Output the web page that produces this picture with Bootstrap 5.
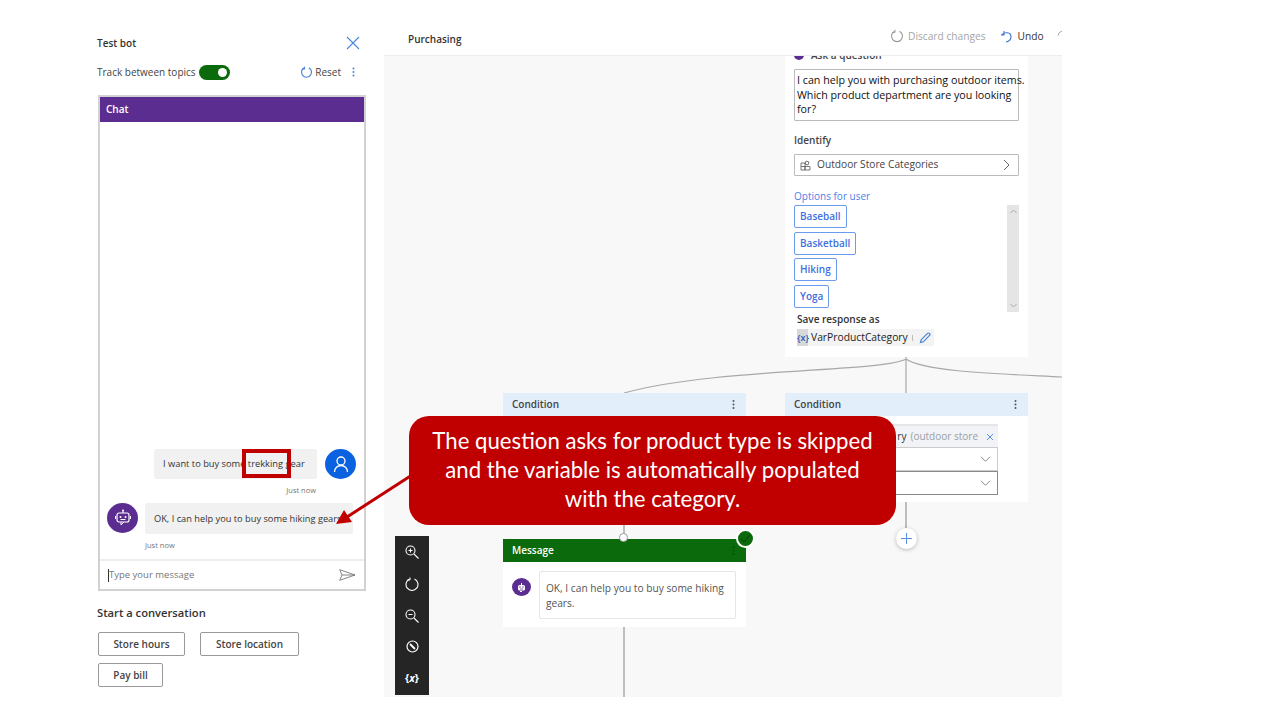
<!DOCTYPE html>
<html lang="en">
  <head>
    <meta charset="UTF-8" />
    <title>Test bot - Purchasing</title>
    <link href="https://cdn.jsdelivr.net/npm/bootstrap@5.3.0/dist/css/bootstrap.min.css" rel="stylesheet" />
    <style>
      html, body { height: 720px; overflow: hidden; }
      body { font-family: "Open Sans", "Noto Sans", sans-serif; font-size: 10px; color: #333; background: #fff; position: relative; }
      svg { display: block; flex: none; }
      .semi { font-weight: 600; }

      /* left test pane */
      .test-pane { width: 269px; margin-left: 97px; }
      .pane-title { height: 59px; padding-top: 36px; font-size: 10px; line-height: 14px; padding-right: 6px; }
      .track-row { height: 26px; font-size: 10px; color: #444; padding-right: 11px; }
      .track-toggle { width: 31px; height: 15px; border-radius: 8px; background: #0b6a0b; margin-left: 3px; padding: 3px; }
      .track-toggle span { width: 9px; height: 9px; border-radius: 50%; background: #fff; }
      .reset-group { gap: 2px; }
      .reset-dots { margin-left: 9px; }
      .chat-frame { margin-top: 10px; margin-left: 1px; width: 268px; height: 496px; border: 2px solid #d2d2d2; }
      .chat-head { height: 25px; background: #5c2d91; color: #fff; font-size: 10px; line-height: 25px; padding-left: 6px; flex: none; }
      .bubble { background: #f1f1f1; font-size: 9.3px; color: #333; border-radius: 2px; white-space: nowrap; }
      .bubble-user { width: 163px; height: 30px; line-height: 30px; padding-left: 9px; overflow: hidden; }
      .bubble-bot { width: 208px; height: 31px; line-height: 31px; padding-left: 9px; overflow: hidden; font-size: 9.25px; }
      .chat-avatar { width: 31px; height: 30px; border-radius: 50%; flex: none; }
      .avatar-user { background: #0b62e0; }
      .avatar-bot { background: #5c2d91; }
      .row-bot { padding-left: 7px; gap: 7px; margin-top: 8px; }
      .stamp { font-size: 7.5px; color: #777; line-height: 10px; }
      .stamp-user { margin-top: 6px; padding-right: 48px; text-align: right; }
      .stamp-bot { padding-left: 45px; margin-top: 6px; margin-bottom: 9px; }
      .chat-input { height: 30px; border-top: 2px solid #eee; flex: none; padding: 0 8px; color: #777; font-size: 9.5px; }
      .caret-bar { width: 1px; height: 13px; background: #333; }
      .start-title { font-size: 11.2px; line-height: 16px; margin-top: 14px; color: #333; }
      .btn-quick { height: 24px; border: 1px solid #999; border-radius: 2px; font-size: 10px; font-weight: 600; color: #444; line-height: 22px; text-align: center; background: #fff; padding: 0; }
      .quick-a { margin-top: 11px; margin-left: 1px; gap: 15px; }
      .quick-hours { width: 87px; }
      .quick-loc { width: 99px; }
      .quick-pay { width: 65px; margin-left: 1px; margin-top: 7px; }

      /* canvas side */
      .flow-side { width: 678px; margin-left: 18px; margin-top: 20px; height: 677px; }
      .flow-head { height: 36px; background: #fff; border-bottom: 1px solid #ececec; padding: 4px 0 0 24px; font-size: 10px; color: #333; }
      .flow-actions { width: 172px; color: #a5a5a5; font-size: 10.2px; margin-top: -6px; }
      .action-undo { margin-left: 14px; }
      .undo-text { color: #333; margin-left: 6px; font-weight: 500; }
      .flow-canvas { height: 641px; background: #f8f8f8; position: relative; overflow: hidden; }
      .flow-node { position: absolute; background: #fff; width: 243px; }
      .node-ask { left: 401px; top: -10px; height: 311px; padding: 0 9px; }
      .node-cond-a { left: 119px; top: 337px; height: 110px; }
      .node-cond-b { left: 401px; top: 337px; height: 109px; }
      .node-msg { left: 119px; top: 483px; height: 88px; }
      .cond-head { height: 23px; background: #e3eefb; padding: 0 11px 0 9px; font-size: 10px; font-weight: 600; color: #444; }
      .msg-head { height: 23px; background: #0b6a0b; padding: 0 11px 0 9px; font-size: 10px; font-weight: 600; color: #fff; }
      .ask-title { height: 23px; padding-bottom: 5px; font-size: 10px; font-weight: 600; color: #444; gap: 7px; }
      .ask-dot { width: 10px; height: 10px; border-radius: 50%; background: #5c2d91; }
      .ask-text { height: 52px; border: 1px solid #bbb; border-radius: 1px; font-size: 10.7px; line-height: 14.5px; color: #111; padding: 3px 2px 0 2px; white-space: nowrap; }
      .field-label { font-size: 10px; font-weight: 600; color: #444; line-height: 14px; }
      .identify-label { margin-top: 12px; margin-bottom: 7px; }
      .pick-field { height: 22px; border: 1px solid #bbb; border-radius: 1px; font-size: 10.2px; color: #444; padding: 0 8px 0 5px; }
      .pick-name { margin-left: 6px; }
      .opt-label { font-size: 10px; color: #4f7fe8; line-height: 14px; margin-top: 13px; }
      .opt-list { height: 107px; margin-top: 2px; }
      .opt-btn { border: 1.5px solid #6b9bef; border-radius: 2px; height: 23px; line-height: 20px; font-size: 10px; font-weight: 600; color: #3f6fe0; padding: 0 5px; background: #fff; margin-bottom: 3.7px; width: fit-content; }
      .scroll-rail { width: 12px; background: #e5e5e5; }
      .save-label { font-size: 10px; font-weight: 600; color: #333; line-height: 14px; margin: 0 0 3px 3px; }
      .var-chip { width: 137px; height: 17px; background: #f3f3f3; margin-left: 3px; font-size: 10.3px; color: #222; }
      .var-tag { width: 11px; height: 17px; background: #d8d8d8; color: #2b58b8; font-size: 9px; font-weight: 600; text-align: center; line-height: 17px; margin-right: 3px; }
      .chip-sep { width: 1px; height: 6px; background: #bbb; margin: 0 6px 0 4px; }
      .cond-body { padding: 8px 30px 0 32px; }
      .cond-chip { height: 23px; border-top: 2px solid #e6e6e6; background: #f1f3f6; color: #9aa0a8; font-size: 10px; }
      .cond-var { color: #333; }
      .cond-drop { height: 24px; border: 1px solid #ccc; padding-right: 6px; }
      .cond-drop.is-dark { border-color: #8a8a8a; }
      .msg-body { padding: 9px 10px 0 9px; }
      .msg-bot { width: 19px; height: 18px; border-radius: 50%; background: #5c2d91; margin-top: 7px; margin-right: 8px; }
      .msg-bubble { width: 198px; height: 48px; border: 1px solid #e6e6e6; border-radius: 2px; padding: 9px 6px 0; font-size: 10.2px; line-height: 14.5px; color: #555; }
      .check-badge { position: absolute; left: 352px; top: 473px; width: 19px; height: 19px; border-radius: 50%; background: #0b6a0b; border: 2px solid #fff; z-index: 2; }
      .dot-port { position: absolute; left: 235px; top: 477px; width: 9px; height: 9px; border-radius: 50%; background: #fff; border: 1px solid #999; z-index: 2; }
      .plus-btn { position: absolute; left: 512px; top: 472px; width: 21px; height: 21px; border-radius: 50%; background: #fff; box-shadow: 0 1px 4px rgba(0, 0, 0, .25); }
      .wire-layer { position: absolute; left: 0; top: 0; }
      .zoom-bar { position: absolute; left: 11px; top: 480px; width: 34px; height: 159px; background: #252525; padding: 9px 0 8px; color: #fff; font-size: 10.5px; font-weight: 700; z-index: 2; }

      /* slide annotations */
      .slide-callout { position: absolute; left: 409px; top: 416px; width: 487px; height: 109px; border-radius: 20px; background: #c00000; color: #fff; z-index: 5; font-family: Lato, "Open Sans", sans-serif; font-size: 22.2px; line-height: 29px; text-align: center; padding-top: 10px; white-space: nowrap; }
      .word-box { position: absolute; left: 242px; top: 449px; width: 49px; height: 29px; border: 4px solid #c00000; z-index: 5; }
      .arrow-layer { position: absolute; left: 0; top: 0; z-index: 6; }
    </style>
  </head>

  <body>
    <div class="d-flex align-items-start">
      <!-- Test bot pane -->
      <div class="test-pane">
        <div class="pane-title d-flex justify-content-between semi">
          <span>Test bot</span>
          <svg width="14" height="14" viewBox="0 0 14 14"><path d="M1 1l12 12M13 1L1 13" stroke="#4a86d8" stroke-width="1.1" fill="none"/></svg>
        </div>
        <div class="track-row d-flex align-items-center">
          <span>Track between topics</span>
          <div class="track-toggle d-flex justify-content-end"><span></span></div>
          <div class="ms-auto d-flex align-items-center reset-group">
            <svg width="13" height="13" viewBox="0 0 13 13"><path d="M4.2 1.8A5 5 0 1 0 8.8 1.8" stroke="#4a86d8" stroke-width="1.2" fill="none"/><path d="M4.6 .6v2.6H2" stroke="#4a86d8" fill="none"/></svg>
            <span>Reset</span>
            <svg class="reset-dots" width="3" height="10" viewBox="0 0 3 10"><circle cx="1.5" cy="1.5" r="1" fill="#4a86d8"/><circle cx="1.5" cy="5" r="1" fill="#4a86d8"/><circle cx="1.5" cy="8.5" r="1" fill="#4a86d8"/></svg>
          </div>
        </div>
        <div class="chat-frame d-flex flex-column">
          <div class="chat-head semi">Chat</div>
          <div class="flex-grow-1 d-flex flex-column justify-content-end">
            <div class="d-flex justify-content-end gap-2 pe-2">
              <div class="bubble bubble-user">I want to buy some trekking gear</div>
              <div class="chat-avatar avatar-user d-flex align-items-center justify-content-center">
                <svg width="18" height="18" viewBox="0 0 18 18"><circle cx="9" cy="6" r="4" fill="none" stroke="#fff" stroke-width="1.3"/><path d="M2.5 17c0-4 3-6.5 6.5-6.5s6.5 2.5 6.5 6.5" fill="none" stroke="#fff" stroke-width="1.3"/></svg>
              </div>
            </div>
            <div class="stamp stamp-user">Just now</div>
            <div class="d-flex row-bot">
              <div class="chat-avatar avatar-bot d-flex align-items-center justify-content-center">
                <svg width="18" height="18" viewBox="0 0 18 18"><path d="M9 1v3" stroke="#fff"/><circle cx="9" cy="1.5" r="1" fill="#fff"/><rect x="3" y="4" width="12" height="9" rx="2" fill="none" stroke="#fff" stroke-width="1.2"/><path d="M1.5 7v3M16.5 7v3M7 13v3l3-3" stroke="#fff" fill="none"/><circle cx="6.5" cy="8" r="1" fill="#fff"/><circle cx="11.5" cy="8" r="1" fill="#fff"/><path d="M6.5 10.5h5" stroke="#fff"/></svg>
              </div>
              <div class="bubble bubble-bot">OK, I can help you to buy some hiking gears.</div>
            </div>
            <div class="stamp stamp-bot">Just now</div>
          </div>
          <div class="chat-input d-flex align-items-center">
            <span class="caret-bar"></span><span>Type your message</span>
            <svg class="ms-auto" width="17" height="12" viewBox="0 0 17 12"><path d="M.7 .7L16 6 .7 11.3 3 6zM3 6h13" fill="none" stroke="#777" stroke-width=".9"/></svg>
          </div>
        </div>
        <div class="start-title semi">Start a conversation</div>
        <div class="d-flex quick-a">
          <button class="btn-quick quick-hours">Store hours</button>
          <button class="btn-quick quick-loc">Store location</button>
        </div>
        <button class="btn-quick quick-pay">Pay bill</button>
      </div>

      <!-- Authoring canvas -->
      <div class="flow-side d-flex flex-column">
        <div class="flow-head d-flex align-items-center justify-content-between">
          <span class="semi">Purchasing</span>
          <div class="flow-actions d-flex align-items-center">
            <svg width="14" height="14" viewBox="0 0 14 14"><path d="M4.5 2.2A5.5 5.5 0 1 0 9.5 2.2" stroke="#999" stroke-width="1.1" fill="none"/><path d="M5 .8v2.6H2.4" stroke="#999" fill="none"/></svg>
            <span class="ms-1">Discard changes</span>
            <svg class="action-undo" width="12" height="13" viewBox="0 0 12 13"><path d="M4 1v4H1M1.5 5C4 1.5 11 2 11 6.5c0 3-2.5 5-5 5.5" stroke="#3f72c8" stroke-width="1.1" fill="none"/></svg>
            <span class="undo-text">Undo</span>
            <svg class="ms-auto" width="5" height="12" viewBox="0 0 5 12"><path d="M5 1.2A5 5 0 0 0 1 5.5" stroke="#aaa" fill="none"/></svg>
          </div>
        </div>
        <div class="flow-canvas">
          <svg class="wire-layer" width="678" height="641" viewBox="0 0 678 641">
            <path d="M522 301v36M522 303C500 316 330 312 240 337M522 303C540 316 620 318 678 321" fill="none" stroke="#a8a8a8" stroke-width="1.2"/>
            <path d="M240 469v14M240 571v70M522 446v26" fill="none" stroke="#bdbdbd" stroke-width="2"/>
          </svg>

          <!-- Question node -->
          <div class="flow-node node-ask">
            <div class="ask-title d-flex align-items-center"><span class="ask-dot"></span><span>Ask a question</span></div>
            <div class="ask-text">I can help you with purchasing outdoor items.<br />Which product department are you looking<br />for?</div>
            <div class="field-label identify-label">Identify</div>
            <div class="pick-field d-flex align-items-center">
              <svg width="11" height="11" viewBox="0 0 11 11"><path d="M1 3h4v7H1zM5 6.5h5V10H5zM1 6.5h4M6 1l3 1-1 3-3-1z" fill="none" stroke="#555" stroke-width=".8"/></svg>
              <span class="pick-name">Outdoor Store Categories</span>
              <svg class="ms-auto" width="7" height="12" viewBox="0 0 7 12"><path d="M1 1l5 5-5 5" fill="none" stroke="#666"/></svg>
            </div>
            <div class="opt-label">Options for user</div>
            <div class="opt-list d-flex justify-content-between">
              <div class="d-flex flex-column">
                <div class="opt-btn">Baseball</div>
                <div class="opt-btn">Basketball</div>
                <div class="opt-btn">Hiking</div>
                <div class="opt-btn">Yoga</div>
              </div>
              <div class="scroll-rail d-flex flex-column justify-content-between align-items-center py-1">
                <svg width="7" height="5" viewBox="0 0 7 5"><path d="M.5 4l3-3 3 3" fill="none" stroke="#aaa"/></svg>
                <svg width="7" height="5" viewBox="0 0 7 5"><path d="M.5 1l3 3 3-3" fill="none" stroke="#aaa"/></svg>
              </div>
            </div>
            <div class="save-label">Save response as</div>
            <div class="var-chip d-flex align-items-center">
              <span class="var-tag">{x}</span>
              <span>VarProductCategory</span>
              <span class="chip-sep"></span>
              <svg width="12" height="12" viewBox="0 0 12 12"><path d="M1.5 10.5l.7-2.8L8.5 1.400a1.300 1.300 0 0 1 2 2L4.300 9.800z" fill="none" stroke="#3f7fd8" stroke-width="1.2"/></svg>
            </div>
          </div>

          <!-- Condition nodes -->
          <div class="flow-node node-cond-a">
            <div class="cond-head d-flex align-items-center justify-content-between">
              <span>Condition</span>
              <svg width="3" height="9" viewBox="0 0 3 9"><circle cx="1.5" cy="1" r="1" fill="#555"/><circle cx="1.5" cy="4.5" r="1" fill="#555"/><circle cx="1.5" cy="8" r="1" fill="#555"/></svg>
            </div>
          </div>
          <div class="flow-node node-cond-b">
            <div class="cond-head d-flex align-items-center justify-content-between">
              <span>Condition</span>
              <svg width="3" height="9" viewBox="0 0 3 9"><circle cx="1.5" cy="1" r="1" fill="#555"/><circle cx="1.5" cy="4.5" r="1" fill="#555"/><circle cx="1.5" cy="8" r="1" fill="#555"/></svg>
            </div>
            <div class="cond-body">
              <div class="cond-chip d-flex align-items-center justify-content-end pe-1">
                <span class="cond-var">ry</span><span class="ms-1">(outdoor store</span>
                <svg class="ms-2" width="8" height="8" viewBox="0 0 8 8"><path d="M1 1l6 6M7 1L1 7" stroke="#5b8fe0" fill="none"/></svg>
              </div>
              <div class="cond-drop d-flex align-items-center justify-content-end">
                <svg width="11" height="6" viewBox="0 0 11 6"><path d="M1 .8l4.5 4.5L10 .8" fill="none" stroke="#888"/></svg>
              </div>
              <div class="cond-drop is-dark d-flex align-items-center justify-content-end">
                <svg width="11" height="6" viewBox="0 0 11 6"><path d="M1 .8l4.5 4.5L10 .8" fill="none" stroke="#888"/></svg>
              </div>
            </div>
          </div>

          <!-- Message node -->
          <span class="dot-port"></span>
          <span class="check-badge d-flex align-items-center justify-content-center">
            <svg width="11" height="9" viewBox="0 0 11 9"><path d="M1 5l3 3 6-7" fill="none" stroke="#063f06"/></svg>
          </span>
          <div class="flow-node node-msg">
            <div class="msg-head d-flex align-items-center justify-content-between">
              <span>Message</span>
              <svg width="3" height="9" viewBox="0 0 3 9"><circle cx="1.5" cy="1" r="1" fill="#0a520a"/><circle cx="1.5" cy="4.5" r="1" fill="#0a520a"/><circle cx="1.5" cy="8" r="1" fill="#0a520a"/></svg>
            </div>
            <div class="msg-body d-flex">
              <div class="msg-bot d-flex align-items-center justify-content-center">
                <svg width="11" height="11" viewBox="0 0 11 11"><rect x="2" y="3" width="7" height="5.5" rx="1.5" fill="#fff"/><path d="M5.5 1v2M4 9.5h2" stroke="#fff"/><circle cx="4" cy="5" r=".7" fill="#5c2d91"/><circle cx="7" cy="5" r=".7" fill="#5c2d91"/><path d="M4 7h3" stroke="#5c2d91" stroke-width=".7"/></svg>
              </div>
              <div class="msg-bubble">OK, I can help you to buy some hiking gears.</div>
            </div>
          </div>
          <div class="plus-btn d-flex align-items-center justify-content-center">
            <svg width="13" height="13" viewBox="0 0 13 13"><path d="M6.5 1v11M1 6.5h11" stroke="#5b8fe0" fill="none"/></svg>
          </div>

          <!-- Zoom toolbar -->
          <div class="zoom-bar d-flex flex-column align-items-center justify-content-between">
            <svg width="14" height="14" viewBox="0 0 14 14"><circle cx="5.5" cy="5.5" r="4.5" fill="none" stroke="#fff" stroke-width="1.1"/><path d="M9 9l4.5 4.5M3.5 5.5h4M5.500 3.500v4" stroke="#fff" stroke-width="1.1"/></svg>
            <svg width="14" height="14" viewBox="0 0 14 14"><path d="M4.5 2A6 6 0 1 0 9.500 2" stroke="#fff" stroke-width="1.1" fill="none"/><path d="M5 .5V3H2.500" stroke="#fff" fill="none"/></svg>
            <svg width="14" height="14" viewBox="0 0 14 14"><circle cx="5.5" cy="5.5" r="4.5" fill="none" stroke="#fff" stroke-width="1.1"/><path d="M9 9l4.5 4.5M3.5 5.5h4" stroke="#fff" stroke-width="1.1"/></svg>
            <svg width="13" height="13" viewBox="0 0 13 13"><circle cx="6.5" cy="6.5" r="5.5" fill="none" stroke="#fff" stroke-width="1.2"/><path d="M4 4l5 5" stroke="#fff" stroke-width="1.8"/></svg>
            <span>{<i>x</i>}</span>
          </div>
        </div>
      </div>
    </div>

    <!-- Slide annotations on top of the screenshot -->
    <div class="word-box"></div>
    <div class="slide-callout">The question asks for product type is skipped<br />and the variable is automatically populated<br />with the category.</div>
    <svg class="arrow-layer" width="1280" height="720" viewBox="0 0 1280 720">
      <path d="M412 475L347 517" stroke="#c00000" stroke-width="3" fill="none"/>
      <path d="M336 524L344 510L352 522z" fill="#c00000"/>
    </svg>
  </body>
</html>
